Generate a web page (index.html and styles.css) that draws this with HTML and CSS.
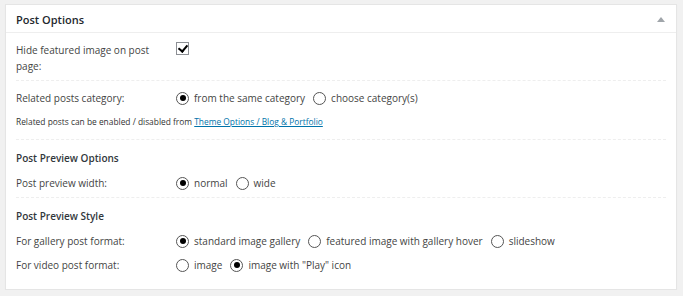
FILE: index.html
```html
<!DOCTYPE html>
<html lang="en">
<head>
    <meta charset="UTF-8">
    <title>Post Options</title>
    <link rel="stylesheet" href="styles.css">
</head>
<body>
    <div class="postbox">
        <div class="postbox-head">
            <h2>Post Options</h2>
            <span class="toggle-arrow"></span>
        </div>
        <div class="inside">
            <div class="section">
                <div class="row">
                    <div class="label">Hide featured image on post page:</div>
                    <div class="field"><span class="check checked"></span></div>
                </div>
            </div>
            <div class="section">
                <div class="row">
                    <div class="label">Related posts category:</div>
                    <div class="field">
                        <span class="radio checked"></span><span class="opt">from the same category</span>
                        <span class="radio"></span><span class="opt">choose category(s)</span>
                    </div>
                </div>
                <p class="note">Related posts can be enabled / disabled from <a href="#">Theme Options / Blog &amp; Portfolio</a></p>
            </div>
            <div class="section">
                <h4>Post Preview Options</h4>
                <div class="row">
                    <div class="label">Post preview width:</div>
                    <div class="field">
                        <span class="radio checked"></span><span class="opt">normal</span>
                        <span class="radio"></span><span class="opt">wide</span>
                    </div>
                </div>
            </div>
            <div class="section last">
                <h4>Post Preview Style</h4>
                <div class="row">
                    <div class="label">For gallery post format:</div>
                    <div class="field">
                        <span class="radio checked"></span><span class="opt">standard image gallery</span>
                        <span class="radio"></span><span class="opt">featured image with gallery hover</span>
                        <span class="radio"></span><span class="opt">slideshow</span>
                    </div>
                </div>
                <div class="row">
                    <div class="label">For video post format:</div>
                    <div class="field">
                        <span class="radio"></span><span class="opt">image</span>
                        <span class="radio checked"></span><span class="opt">image with "Play" icon</span>
                    </div>
                </div>
            </div>
        </div>
    </div>
</body>
</html>
```

FILE: styles.css
```css
body {
    margin: 0;
    padding: 4px 6px 0 5px;
    background: #f1f1f1;
    font-family: "Open Sans", sans-serif;
    font-size: 10px;
    color: #444;
}
.postbox {
    background: #fff;
    border: 1px solid #e5e5e5;
    box-shadow: 0 1px 1px rgba(0,0,0,0.04);
}
.postbox-head {
    display: flex;
    align-items: center;
    justify-content: space-between;
    height: 26px;
    padding: 1px 11px 0 10px;
    border-bottom: 1px solid #eee;
}
.postbox-head h2 {
    margin: 0;
    font-size: 11px;
    font-weight: 600;
    color: #23282d;
}
.toggle-arrow {
    width: 0;
    height: 0;
    border-left: 4px solid transparent;
    border-right: 4px solid transparent;
    border-bottom: 5px solid #a0a5aa;
}
.inside {
    padding: 0 10px;
}
.section {
    border-bottom: 1px dashed #eee;
    padding: 9px 0 6px;
}
.section.last {
    border-bottom: none;
    padding-bottom: 16px;
}
.section h4 {
    margin: 1px 0 9px;
    font-size: 10px;
    line-height: 16px;
    font-weight: 600;
    color: #32373c;
}
.row {
    display: grid;
    grid-template-columns: 160px 1fr;
    line-height: 16px;
}
.row + .row {
    margin-top: 8px;
}
.label {
    max-width: 140px;
}
.field {
    display: flex;
    align-items: center;
    align-self: start;
    height: 16px;
}
.check {
    width: 11px;
    height: 11px;
    border: 1px solid #8c8f94;
    background: #fff;
    position: relative;
    align-self: flex-start;
}
.check.checked::after {
    content: "";
    position: absolute;
    left: 3px;
    top: 0;
    width: 4px;
    height: 7px;
    border-right: 2px solid #000;
    border-bottom: 2px solid #000;
    transform: rotate(40deg);
}
.radio {
    width: 11px;
    height: 11px;
    border: 1px solid #555;
    border-radius: 50%;
    background: #fff;
    display: inline-flex;
    align-items: center;
    justify-content: center;
    margin-right: 5px;
}
.radio.checked::after {
    content: "";
    width: 6px;
    height: 6px;
    border-radius: 50%;
    background: #000;
}
.opt {
    margin-right: 8px;
}
.note {
    margin: 10px 0 5px;
    font-size: 8.4px;
    line-height: 12px;
    color: #333;
}
.note a {
    color: #0073aa;
}
```
